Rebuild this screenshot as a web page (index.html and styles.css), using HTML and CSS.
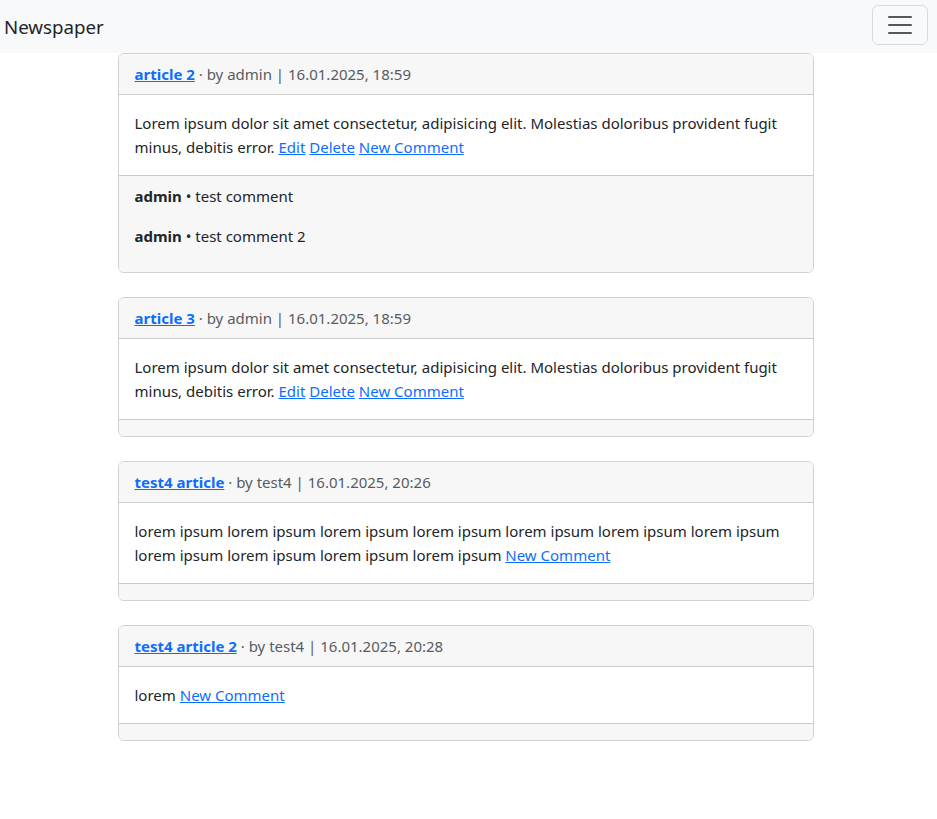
FILE: index.html
```html
<!DOCTYPE html>
<html lang="en">
<head>
<meta charset="utf-8">
<title>Newspaper</title>
<link rel="stylesheet" href="styles.css">
</head>
<body>
<nav class="navbar">
  <a class="brand" href="#">Newspaper</a>
  <button class="toggler" type="button" aria-label="Toggle navigation">
    <svg width="30" height="30" viewBox="0 0 30 30"><path d="M4 7h22M4 15h22M4 23h22" stroke="#55595c" stroke-width="2" stroke-linecap="round" fill="none"/></svg>
  </button>
</nav>
<main class="feed">
  <article class="card">
    <div class="card-header"><a class="title" href="#">article 2</a> <span class="meta">· by admin | 16.01.2025, 18:59</span></div>
    <div class="card-body">Lorem ipsum dolor sit amet consectetur, adipisicing elit. Molestias doloribus provident fugit minus, debitis error. <a href="#">Edit</a> <a href="#">Delete</a> <a href="#">New Comment</a></div>
    <div class="card-footer">
      <p class="comment"><b>admin</b> • test comment</p>
      <p class="comment"><b>admin</b> • test comment 2</p>
    </div>
  </article>
  <article class="card">
    <div class="card-header"><a class="title" href="#">article 3</a> <span class="meta">· by admin | 16.01.2025, 18:59</span></div>
    <div class="card-body">Lorem ipsum dolor sit amet consectetur, adipisicing elit. Molestias doloribus provident fugit minus, debitis error. <a href="#">Edit</a> <a href="#">Delete</a> <a href="#">New Comment</a></div>
    <div class="card-footer"></div>
  </article>
  <article class="card">
    <div class="card-header"><a class="title" href="#">test4 article</a> <span class="meta">· by test4 | 16.01.2025, 20:26</span></div>
    <div class="card-body">lorem ipsum lorem ipsum lorem ipsum lorem ipsum lorem ipsum lorem ipsum lorem ipsum lorem ipsum lorem ipsum lorem ipsum lorem ipsum <a href="#">New Comment</a></div>
    <div class="card-footer"></div>
  </article>
  <article class="card">
    <div class="card-header"><a class="title" href="#">test4 article 2</a> <span class="meta">· by test4 | 16.01.2025, 20:28</span></div>
    <div class="card-body">lorem <a href="#">New Comment</a></div>
    <div class="card-footer"></div>
  </article>
</main>
</body>
</html>
```

FILE: styles.css
```css
* { box-sizing: border-box; }
html, body {
  margin: 0;
  background: #fff;
}
body {
  font-family: "Noto Sans", "Open Sans", sans-serif;
  font-size: 15px;
  line-height: 24px;
  color: #212529;
}
a { color: #0d6efd; }

.navbar {
  background: #f8f9fa;
  height: 53px;
  display: flex;
  align-items: center;
  justify-content: space-between;
  padding: 0 9px 0 4px;
}
.brand {
  font-size: 18.7px;
  line-height: 30px;
  color: #212529;
  text-decoration: none;
}
.toggler {
  width: 56px;
  height: 40px;
  margin-bottom: 4px;
  border: 1px solid rgba(0,0,0,.12);
  border-radius: 6px;
  background: transparent;
  display: flex;
  align-items: center;
  justify-content: center;
  padding: 0;
}

.feed {
  width: 696px;
  margin-left: calc(50% - 351px);
}
.card {
  border: 1px solid rgba(0,0,0,.175);
  border-radius: 6px;
  margin-bottom: 24px;
  overflow: hidden;
}
.card-header {
  background: #f7f7f7;
  padding: 8px 16px;
  border-bottom: 1px solid rgba(0,0,0,.175);
}
.title { font-weight: 700; }
.meta { color: #595c5f; }
.card-body {
  padding: 16px;
}
.card-footer {
  background: #f7f7f7;
  border-top: 1px solid rgba(0,0,0,.175);
  padding: 8px 16px;
  min-height: 17px;
}
.comment {
  margin: 0 0 16px;
}
```
